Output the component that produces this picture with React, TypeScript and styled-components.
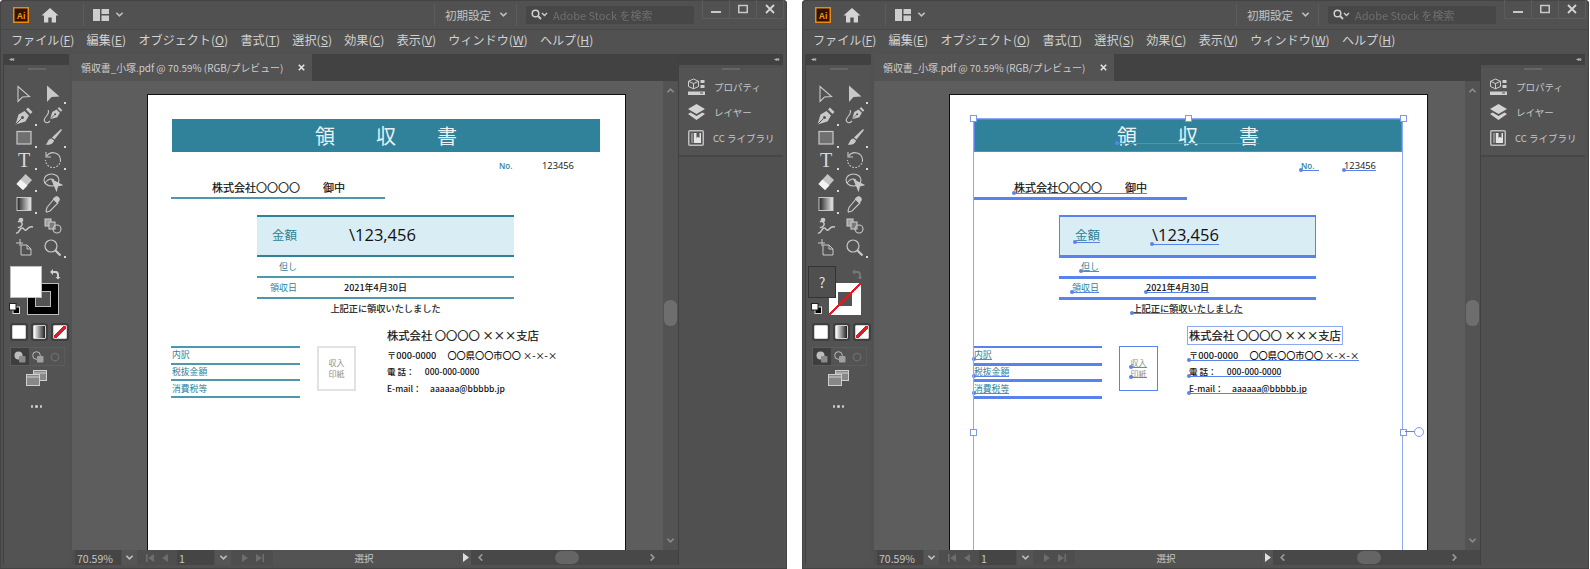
import * as React from "react";
import styled, { createGlobalStyle, css, ThemeProvider } from "styled-components";

const UI_FONT = `"Noto Sans CJK JP", "Noto Sans", sans-serif`;
const TEAL = "#2f8299";
const RULE = "#4d98ae";
const BLUE = "#5a82ec";

const GlobalStyle = createGlobalStyle`
  html, body { margin: 0; padding: 0; background: #fff; }
  body { font-family: ${UI_FONT}; }
`;

const Page = styled.div`
  display: flex;
  gap: 15px;
  width: 1590px;
  height: 569px;
  overflow: hidden;
  background: #fff;
`;

const Window = styled.div`
  width: 787px;
  height: 569px;
  flex: none;
  display: flex;
  flex-direction: column;
  background: #515151;
  color: #cfcfcf;
  border-radius: 4px 4px 0 0;
  box-shadow: inset 0 0 0 1px #444;
  padding: 0 4px;
  box-sizing: border-box;
  filter: blur(0.3px);
`;

/* title bar */
const TitleBar = styled.div`
  height: 30px;
  flex: none;
  display: flex;
  align-items: center;
  border-bottom: 1px solid #474747;
  box-sizing: border-box;
  margin: 0 -4px;
  padding: 0 3px 0 13px;
`;
const Divider = styled.div<{ $left: number; $right: number }>`
  width: 1px;
  height: 22px;
  background: #5c5c5c;
  margin: 0 ${(p) => p.$right}px 0 ${(p) => p.$left}px;
`;
const Workspace = styled.span`
  font-size: 11.5px;
  color: #c4c4c4;
  white-space: nowrap;
`;
const Search = styled.div`
  width: 168px;
  height: 18px;
  background: #474747;
  border-radius: 2px;
  display: flex;
  align-items: center;
  gap: 4px;
  padding-left: 5px;
  box-sizing: border-box;
  font-size: 11px;
  color: #6f6f6f;
  white-space: nowrap;
`;
const WinButtons = styled.div`
  display: flex;
  margin: -11px 0 0 8px;
  border: 1px solid #5c5c5c;
  border-top: 0;
  height: 18px;
`;
const WinButton = styled.div`
  width: 26px;
  display: flex;
  align-items: center;
  justify-content: center;
  & + & { border-left: 1px solid #5c5c5c; }
`;

/* menu */
const MenuBar = styled.div`
  height: 24px;
  flex: none;
  display: flex;
  align-items: center;
  gap: 12.3px;
  padding: 0 0 6px 7px;
  box-sizing: border-box;
  font-size: 12.1px;
  color: #d2d2d2;
  white-space: nowrap;
`;
const MenuKey = styled.span`
  text-decoration: underline;
  text-underline-offset: 1px;
`;

const Body = styled.div`
  flex: none;
  height: 511px;
  display: flex;
`;

/* left tools */
const Toolbar = styled.div`
  width: 65px;
  flex: none;
  margin-right: 3px;
  background: #535353;
  box-shadow: -1px 0 0 #414141;
  display: flex;
  flex-direction: column;
`;
const PanelHead = styled.div<{ $right?: boolean }>`
  height: 11px;
  flex: none;
  background: #414141;
  color: #b4b4b4;
  font-size: 6px;
  line-height: 9px;
  letter-spacing: -1px;
  padding: 0 5px;
  text-align: ${(p) => (p.$right ? "right" : "left")};
`;
const Grip = styled.div`
  width: 18px;
  height: 2px;
  margin: 3px auto 0;
  background: #666;
`;
const ToolGrid = styled.div`
  display: grid;
  grid-template-columns: 29px 29px;
  grid-auto-rows: 22px;
  padding: 13px 0 0 5px;
`;
const Tool = styled.div<{ $more?: boolean }>`
  position: relative;
  display: flex;
  align-items: center;
  justify-content: center;
  ${(p) =>
    p.$more &&
    css`
      &::after {
        content: "";
        position: absolute;
        right: 1px;
        bottom: 1px;
        width: 2px;
        height: 2px;
        background: #d8d8d8;
      }
    `}
`;
const ColorWell = styled.div`
  position: relative;
  height: 52px;
  margin-top: 7px;
`;
const FillBox = styled.div<{ $unknown?: boolean }>`
  position: absolute;
  left: ${(p) => (p.$unknown ? 2 : 6)}px;
  top: 0;
  width: ${(p) => (p.$unknown ? 28 : 32)}px;
  height: 32px;
  background: ${(p) => (p.$unknown ? "#4f4f4f" : "#fff")};
  border: 1px solid ${(p) => (p.$unknown ? "#333" : "#bdbdbd")};
  box-sizing: border-box;
  z-index: 1;
  color: #ddd;
  font-size: 14px;
  display: flex;
  align-items: center;
  justify-content: center;
`;
const StrokeBox = styled.div<{ $none?: boolean }>`
  position: absolute;
  left: 23px;
  top: 17px;
  width: 32px;
  height: 32px;
  box-sizing: border-box;
  background: ${(p) => (p.$none ? "#fff" : "#000")};
  border: ${(p) => (p.$none ? "0" : "1px solid #bdbdbd")};
  display: flex;
  align-items: center;
  justify-content: center;
  &::before {
    content: "";
    width: 14px;
    height: 14px;
    background: #535353;
    border: ${(p) => (p.$none ? "0" : "1px solid #bdbdbd")};
  }
  ${(p) =>
    p.$none &&
    css`
      &::after {
        content: "";
        position: absolute;
        inset: 0;
        background: linear-gradient(135deg, transparent 0 47%, #e01b24 47% 53%, transparent 53%);
      }
    `}
`;
const WellGlyph = styled.div<{ $left: number; $top: number }>`
  position: absolute;
  left: ${(p) => p.$left}px;
  top: ${(p) => p.$top}px;
  line-height: 0;
`;
const SwatchRow = styled.div`
  display: flex;
  gap: 3px;
  margin: 5px 0 0 6px;
`;
const Swatch = styled.div<{ $kind: "fill" | "grad" | "none" }>`
  width: 12px;
  height: 12px;
  border: 1px solid #d0d0d0;
  outline: 2px solid #3f3f3f;
  border-radius: 1px;
  margin: 2px;
  box-sizing: content-box;
  background: ${(p) =>
    p.$kind === "fill"
      ? "#fff"
      : p.$kind === "grad"
        ? "linear-gradient(90deg, #fff, #222)"
        : "linear-gradient(135deg, #fff 0 40%, #e01b24 40% 60%, #fff 60%)"};
`;
const ModeRow = styled.div`
  display: flex;
  width: 53px;
  height: 17px;
  margin: 6px 0 0 6px;
  border: 1px solid #5c5c5c;
`;
const Mode = styled.div<{ $on?: boolean }>`
  flex: 1;
  display: flex;
  align-items: center;
  justify-content: center;
  background: ${(p) => (p.$on ? "#3e3e3e" : "transparent")};
`;
const ScreenMode = styled.div`
  display: flex;
  justify-content: center;
  margin-top: 4px;
`;
const MoreDots = styled.div`
  display: flex;
  justify-content: center;
  gap: 2px;
  margin-top: 19px;
  span {
    width: 2.5px;
    height: 2.5px;
    border-radius: 50%;
    background: #c8c8c8;
  }
`;

/* center */
const Center = styled.div`
  width: 606px;
  flex: none;
  display: flex;
  flex-direction: column;
`;
const TabBar = styled.div`
  height: 27px;
  flex: none;
  background: #424242;
  display: flex;
`;
const Tab = styled.div`
  width: 240px;
  background: #535353;
  display: flex;
  align-items: center;
  justify-content: space-between;
  padding: 0 7px 0 9px;
  box-sizing: border-box;
  font-size: 9.9px;
  color: #cdcdcd;
  white-space: nowrap;
`;
const CanvasRow = styled.div`
  flex: none;
  height: 469px;
  display: flex;
`;
const Canvas = styled.div`
  width: 591px;
  flex: none;
  background: #5d5d5d;
  padding: 13px 0 0 75px;
  box-sizing: border-box;
  overflow: hidden;
`;
const VScroll = styled.div`
  width: 15px;
  flex: none;
  background: #535353;
  display: flex;
  flex-direction: column;
  align-items: center;
  justify-content: space-between;
  padding: 5px 0;
  box-sizing: border-box;
`;
const VThumb = styled.div`
  width: 13px;
  height: 26px;
  border-radius: 6px;
  background: #6e6e6e;
  margin-top: -6px;
`;
const StatusBar = styled.div`
  height: 15px;
  flex: none;
  background: #4e4e4e;
  display: flex;
  align-items: stretch;
  font-size: 10.5px;
  color: #c6c6c6;
  padding-left: 3px;
`;
const StatusField = styled.div<{ $w: number }>`
  width: ${(p) => p.$w}px;
  background: #454545;
  line-height: 17px;
  padding-left: 2px;
  box-sizing: border-box;
`;
const StatusBtn = styled.div<{ $w: number }>`
  width: ${(p) => p.$w}px;
  background: #555;
  margin-left: 1px;
  display: flex;
  align-items: center;
  justify-content: center;
`;
const StatusNav = styled.div<{ $w: number }>`
  width: ${(p) => p.$w}px;
  display: flex;
  align-items: center;
  justify-content: center;
  gap: 7px;
`;
const StatusLabel = styled.div`
  width: 186px;
  padding-right: 4px;
  box-sizing: border-box;
  text-align: center;
  line-height: 16px;
  background: #535353;
  font-size: 9.5px;
`;
const HScroll = styled.div`
  flex: 1;
  position: relative;
  display: flex;
  align-items: center;
  justify-content: space-between;
  padding: 0 21px 0 5px;
  background: #484848;
`;
const HThumb = styled.div`
  position: absolute;
  left: 84px;
  top: 1px;
  width: 24px;
  height: 13px;
  border-radius: 7px;
  background: #656565;
`;

/* right panel */
const RightPanel = styled.div`
  width: 104px;
  flex: none;
  margin-left: 1px;
  background: #505050;
  box-shadow: -1px 0 0 #414141;
`;
const PanelGroup = styled.div`
  height: 89px;
  background: #535353;
  border-bottom: 2px solid #474747;
  box-sizing: border-box;
`;
const PanelItems = styled.div`
  display: flex;
  flex-direction: column;
  padding: 4px 0 0 9px;
`;
const PanelItem = styled.div`
  height: 25.5px;
  display: flex;
  align-items: center;
  gap: 9px;
  font-size: 9.5px;
  color: #c8c8c8;
  white-space: nowrap;
`;

/* the receipt on the artboard */
const Artboard = styled.div`
  position: relative;
  width: 479px;
  height: 470px;
  background: #fff;
  border: 1px solid #111;
  border-bottom: 0;
  box-sizing: border-box;
  padding: 24px 0 0 24px;
  overflow: hidden;
  color: #111;
  font-family: "Noto Sans CJK JP", "Open Sans", sans-serif;
`;

// text objects show their baseline and anchor point when selected
const anchored = css<{ $boxed?: boolean }>`
  position: relative;
  ${(p) =>
    p.theme.selected &&
    !p.$boxed &&
    css`
      &::after {
        content: "";
        position: absolute;
        left: 0;
        right: 0;
        bottom: 1px;
        height: 1px;
        background: ${BLUE};
      }
      &::before {
        content: "";
        position: absolute;
        left: -2px;
        bottom: 0;
        width: 4px;
        height: 4px;
        border-radius: 50%;
        background: ${BLUE};
      }
    `}
  ${(p) =>
    p.theme.selected &&
    p.$boxed &&
    css`
      outline: 1px solid #8ea9f2;
      outline-offset: 1px;
    `}
`;
const ruleColor = (p: { theme: { selected?: boolean } }) => (p.theme.selected ? BLUE : RULE);
const heavyRule = (p: { theme: { selected?: boolean } }) => (p.theme.selected ? BLUE : TEAL);
const ruleGlow = (p: { theme: { selected?: boolean } }) => (p.theme.selected ? `box-shadow: 0 1px 0 ${BLUE};` : "");

const HeadBand = styled.div`
  width: 428px;
  height: 33px;
  background: ${TEAL};
  box-sizing: border-box;
  border: 1px solid ${(p) => (p.theme.selected ? BLUE : "#2f8299")};
  display: flex;
  justify-content: center;
  align-items: center;
`;
const HeadText = styled.span`
  ${anchored}
  display: flex;
  gap: 41px;
  font-size: 20px;
  line-height: 26px;
  color: #e8f1f4;
  &::before { bottom: 4px !important; }
  &::after { bottom: 5px !important; }
`;
const NoRow = styled.div`
  height: 12px;
  margin: 8px 0 0 327px;
  display: flex;
  align-items: center;
`;
const NoLabel = styled.span`
  ${anchored}
  width: 18px;
  font-size: 8px;
  font-weight: 600;
  color: ${TEAL};
  font-family: "Open Sans", sans-serif;
  line-height: 12px;
`;
const NoValue = styled.span`
  ${anchored}
  margin-left: 25px;
  font-size: 9.3px;
  line-height: 12px;
  font-family: "Open Sans", sans-serif;
  font-weight: 500;
`;
const NameRow = styled.div`
  width: 214px;
  height: 27px;
  margin-left: -1px;
  padding-left: 41px;
  box-sizing: border-box;
  border-bottom: 2px solid ${ruleColor};
  ${ruleGlow}
  display: flex;
  align-items: flex-end;
  padding-bottom: 2px;
`;
const NameText = styled.span`
  ${anchored}
  display: flex;
  gap: 23px;
  font-size: 11px;
  line-height: 16px;
  white-space: nowrap;
  -webkit-text-stroke: 0.2px #111;
`;
const AmountBlock = styled.div`
  width: 257px;
  margin: 16px 0 0 85px;
`;
const AmountRow = styled.div`
  height: 42px;
  box-sizing: border-box;
  background: #d9edf4;
  border-top: 2px solid ${heavyRule};
  border-bottom: 2px solid ${heavyRule};
  ${ruleGlow}
  padding-bottom: 2px;
  display: flex;
  align-items: center;
  ${(p) =>
    p.theme.selected &&
    css`
      border-left: 1px solid ${BLUE};
      border-right: 1px solid ${BLUE};
    `}
`;
const InfoRow = styled.div`
  height: 21px;
  box-sizing: border-box;
  border-bottom: 2px solid ${ruleColor};
  ${ruleGlow}
  padding-bottom: 1px;
  display: flex;
  align-items: center;
`;
const LabelCell = styled.div`
  width: 40px;
  flex: none;
  display: flex;
  justify-content: flex-end;
`;
const Label = styled.span<{ $big?: boolean }>`
  ${anchored}
  font-size: ${(p) => (p.$big ? 12.5 : 9)}px;
  line-height: ${(p) => (p.$big ? 18 : 13)}px;
  color: ${TEAL};
  white-space: nowrap;
`;
const Amount = styled.span`
  ${anchored}
  margin-left: 52px;
  font-family: "Open Sans", sans-serif;
  font-size: 16.5px;
  line-height: 22px;
`;
const DateText = styled.span`
  ${anchored}
  margin-left: 47px;
  font-size: 9px;
  line-height: 13px;
  white-space: nowrap;
  font-weight: 500;
`;
const NoticeRow = styled.div`
  height: 20px;
  padding-bottom: 2px;
  box-sizing: border-box;
  display: flex;
  justify-content: center;
  align-items: center;
`;
const Notice = styled.span`
  ${anchored}
  font-size: 9.2px;
  line-height: 13px;
  white-space: nowrap;
  -webkit-text-stroke: 0.15px #111;
`;
const BottomRow = styled.div`
  display: flex;
  align-items: flex-start;
  margin: 9px 0 0 -1px;
`;
const ListCol = styled.div`
  width: 129px;
  margin-top: 18px;
  border-top: 2px solid ${ruleColor};
  ${ruleGlow}
`;
const ListRow = styled.div`
  height: 16.7px;
  box-sizing: border-box;
  border-bottom: 2px solid ${ruleColor};
  ${ruleGlow}
  display: flex;
  align-items: center;
  padding-left: 1px;
`;
const ListLabel = styled.span`
  ${anchored}
  font-size: 8.8px;
  line-height: 12px;
  color: ${TEAL};
`;
const Stamp = styled.div`
  width: 39px;
  height: 45px;
  margin: 18px 0 0 17px;
  box-sizing: border-box;
  border: ${(p) => (p.theme.selected ? `1px solid ${BLUE}` : "2px solid #e2e2e2")};
  display: flex;
  flex-direction: column;
  align-items: center;
  justify-content: center;
`;
const StampText = styled.span`
  ${anchored}
  font-size: 8px;
  line-height: 10.5px;
  color: #8d8d8d;
`;
const IssuerCol = styled.div`
  margin-left: 31px;
  display: flex;
  flex-direction: column;
  align-items: flex-start;
`;
const IssuerName = styled.span`
  ${anchored}
  font-size: 11.3px;
  line-height: 15px;
  white-space: nowrap;
  margin-bottom: 2px;
  -webkit-text-stroke: 0.2px #111;
`;
const IssuerLine = styled.span<{ $small?: boolean }>`
  ${anchored}
  font-size: ${(p) => (p.$small ? 8.5 : 9.2)}px;
  line-height: 14px;
  margin-top: 2.5px;
  white-space: pre;
  font-weight: 500;
`;

/* selection frame lies over the artwork */
const SelectionFrame = styled.div`
  position: absolute;
  left: 23px;
  top: 23px;
  width: 430px;
  height: 500px;
  border: 1px solid #8ea9f2;
  box-sizing: border-box;
  pointer-events: none;
`;
const Handle = styled.div<{ $x: number; $y: number; $round?: boolean }>`
  position: absolute;
  left: ${(p) => p.$x}px;
  top: ${(p) => p.$y}px;
  width: ${(p) => (p.$round ? 8 : 5)}px;
  height: ${(p) => (p.$round ? 8 : 5)}px;
  background: #fff;
  border: 1px solid #7c9bf0;
  border-radius: ${(p) => (p.$round ? "50%" : "0")};
`;
const RotateStem = styled.div`
  position: absolute;
  left: 455px;
  top: 336px;
  width: 11px;
  height: 1px;
  background: ${BLUE};
`;

const G = "#c8c8c8";

const Chevron = ({ dir = "down", size = 9, color = "#c0c0c0" }: { dir?: "down" | "up" | "left" | "right"; size?: number; color?: string }) => {
  const d = { down: "M1.5 3l3.5 3.5L8.5 3", up: "M1.5 7L5 3.5 8.5 7", left: "M7 1.5L3.5 5 7 8.5", right: "M3 1.5L6.5 5 3 8.5" }[dir];
  return (
    <svg width={size} height={size} viewBox="0 0 10 10">
      <path d={d} fill="none" stroke={color} strokeWidth="1.8" />
    </svg>
  );
};

const ToolIcon = ({ children }: { children: React.ReactNode }) => (
  <svg width="20" height="20" viewBox="0 0 20 20" fill="none">
    {children}
  </svg>
);

const PenNib = () => (
  <g>
    <path d="M1.500 18.500L4.500 8.500 10.500 5 15 9.500 11.500 15.500z" fill={G} />
    <path d="M12 3.500L14 1.500 18.500 6 16.500 8z" fill={G} />
    <path d="M1.500 18.500L7.500 12.500" stroke="#535353" strokeWidth="1" />
    <circle cx="8.500" cy="11.500" r="1.500" fill="#535353" />
  </g>
);

const TOOLS: { more?: boolean; icon: React.ReactNode }[] = [
  { icon: <path d="M4 2.5v15l4.500-4.500 7-.5z" stroke={G} strokeWidth="1.1" /> },
  { more: true, icon: <path d="M4 1.500v16.500l4.500-5 8-.5z" fill={G} /> },
  { more: true, icon: <PenNib /> },
  { icon: <g><g transform="translate(6 0) scale(.72)"><PenNib /></g><path d="M7 15c-4 4-7 0-5-3s5-5 3-8" stroke={G} strokeWidth="1.100" /></g> },
  { more: true, icon: <rect x="3" y="3.500" width="14" height="12.500" fill="#707070" stroke={G} strokeWidth="1.200" /> },
  { more: true, icon: <g fill={G}><path d="M18 1l1 1-7.500 9.500-2.500-2z" /><path d="M8.500 10.500l2.500 2c-.5 3.500-5 5-8.500 4 2.500-1 2-5.500 6-6z" /></g> },
  { more: true, icon: <text x="10" y="17" textAnchor="middle" fontFamily="Liberation Serif, serif" fontSize="20" fill="#d8d8d8">T</text> },
  { more: true, icon: <g stroke={G} strokeWidth="1.100"><path d="M3.800 6A7.500 7.500 0 0 1 17.500 10" /><path d="M17.500 10A7.500 7.500 0 0 1 2.500 10" strokeDasharray="1.800 1.400" /><path d="M3 2v5h5" /></g> },
  { more: true, icon: <g><path d="M11.500 2l6.500 6-9 10-6.500-6z" fill="#c4c4c4" /><path d="M6.500 7.500l7 6.100L9 18l-6.500-6z" fill="#f2f2f2" /></g> },
  { icon: <g stroke={G} strokeWidth="1.100"><ellipse cx="8.500" cy="8" rx="7.500" ry="6" /><path d="M2 11c3-4 6-5 9-3" /><path d="M9 8l10 5-4.500 1-1 4.500z" fill={G} /></g> },
  { more: true, icon: <g><defs><linearGradient id="toolGrad"><stop offset="0" stopColor="#222" /><stop offset="1" stopColor="#eee" /></linearGradient></defs><rect x="3" y="3.500" width="14" height="13" fill="url(#toolGrad)" stroke={G} /></g> },
  { icon: <g stroke={G} strokeWidth="1.100"><path d="M11 5l4 4-8 8-3.500 1-.5-1 1-3.500z" /><path d="M12 3.500c2-2.500 6 1.500 3.500 3.500l-1.500 1.500-3.500-3.500z" fill={G} /></g> },
  { icon: <g stroke={G} strokeWidth="1.500"><path d="M2 17c3 1 3-4 6-5 2-.5 2 3 4 2s2-4 7-3" /><path d="M4 6c2-2 5 1 4 3s-3 3-4 2" /><circle cx="7" cy="4" r="1.600" fill={G} /></g> },
  { icon: <g stroke={G} strokeWidth="1.100"><rect x="2" y="3" width="6" height="7" fill="#a0a0a0" /><rect x="6" y="6" width="6" height="7" fill="#7a7a7a" /><circle cx="14" cy="13" r="4" /></g> },
  { icon: <g stroke={G} strokeWidth="1"><path d="M6 1v7M2 5h7" /><path d="M7 7h6l4 4v6H7z" /><path d="M13 7v4h4" /></g> },
  { more: true, icon: <g stroke={G}><circle cx="8" cy="8" r="6" strokeWidth="1.200" /><path d="M12.500 12.500l5 5" strokeWidth="2.200" /></g> },
];

const MENU: [string, string][] = [
  ["ファイル", "F"],
  ["編集", "E"],
  ["オブジェクト", "O"],
  ["書式", "T"],
  ["選択", "S"],
  ["効果", "C"],
  ["表示", "V"],
  ["ウィンドウ", "W"],
  ["ヘルプ", "H"],
];

const AiLogo = () => (
  <svg width="16" height="16" viewBox="0 0 16 16">
    <rect x=".75" y=".75" width="14.500" height="14.500" fill="#2f1400" stroke="#e98a14" strokeWidth="1.500" />
    <text x="8" y="11.500" textAnchor="middle" fontFamily="Liberation Sans, sans-serif" fontSize="8.500" fontWeight="700" fill="#f59a1c">Ai</text>
  </svg>
);

const HomeIcon = () => (
  <svg width="18" height="16" viewBox="0 0 18 16" style={{ marginLeft: 12 }}>
    <path d="M9 1L0.500 8.500h2.500V15.500h4.300v-5h3.400v5H15V8.500h2.500z" fill="#d4d4d4" />
  </svg>
);

const LayoutIcon = () => (
  <svg width="16" height="12" viewBox="0 0 16 12">
    <path d="M0 0h7v12H0zM8.500 0H16v5H8.500zM8.500 6.500H16V12H8.500z" fill="#cdcdcd" />
  </svg>
);

const SearchIcon = () => (
  <svg width="18" height="11" viewBox="0 0 18 11">
    <circle cx="4.500" cy="4.500" r="3.300" fill="none" stroke="#d0d0d0" strokeWidth="1.500" />
    <path d="M7 7l3 3" stroke="#d0d0d0" strokeWidth="1.800" />
    <path d="M11 4l2.500 2.500L16 4" fill="none" stroke="#d0d0d0" strokeWidth="1.300" />
  </svg>
);

const PropsIcon = () => (
  <svg width="17" height="18" viewBox="0 0 17 18">
    <path d="M5.500 1l5 2.300v5.200l-5 2.300-5-2.300V3.300z" fill="none" stroke="#cfcfcf" />
    <path d="M.500 3.300l5 2.300 5-2.300M5.500 5.600v5" stroke="#cfcfcf" fill="none" />
    <path d="M12.500 2h4v3h-4zM12.500 7h4v3h-4z" fill="#cfcfcf" />
    <path d="M0 13.500h17v3.500H0z" fill="#cfcfcf" />
    <path d="M12 15h3" stroke="#535353" />
  </svg>
);

const LayersIcon = () => (
  <svg width="17" height="16" viewBox="0 0 17 16">
    <path d="M8.500 0L17 5l-8.500 5L0 5z" fill="#d4d4d4" />
    <path d="M2.500 8.500L8.500 12l6-3.500L17 10l-8.500 6L0 10z" fill="#d4d4d4" />
  </svg>
);

const LibraryIcon = () => (
  <svg width="16" height="16" viewBox="0 0 16 16">
    <rect x=".750" y=".750" width="14.500" height="14.500" rx="1" fill="none" stroke="#bdbdbd" strokeWidth="1.500" />
    <path d="M3 3h2.500v10H3z" fill="#8a8a8a" />
    <path d="M6 3h7v10H6z" fill="#e4e4e4" />
    <path d="M8.500 3h3v5l-1.500-1.200L8.500 8z" fill="#535353" />
  </svg>
);

const NavPair = ({ flip }: { flip?: boolean }) => (
  <StatusNav $w={flip ? 42 : 40}>
    <svg width="8" height="8" viewBox="0 0 8 8">
      <path d={flip ? "M1 0l6 4-6 4z" : "M0 0h1.500v8H0zM8 0L2 4l6 4z"} fill="#6e6e6e" />
    </svg>
    <svg width="8" height="8" viewBox="0 0 8 8">
      <path d={flip ? "M6.500 0H8v8H6.500zM0 0l6 4-6 4z" : "M7 0L1 4l6 4z"} fill="#6e6e6e" />
    </svg>
  </StatusNav>
);

const Receipt = ({ selected }: { selected: boolean }) => (
  <Artboard>
    <HeadBand>
      <HeadText>
        <span>領</span>
        <span>収</span>
        <span>書</span>
      </HeadText>
    </HeadBand>
    <NoRow>
      <NoLabel>No.</NoLabel>
      <NoValue>123456</NoValue>
    </NoRow>
    <NameRow>
      <NameText>
        <span>株式会社〇〇〇〇</span>
        <span>御中</span>
      </NameText>
    </NameRow>
    <AmountBlock>
      <AmountRow>
        <LabelCell>
          <Label $big>金額</Label>
        </LabelCell>
        <Amount>\123,456</Amount>
      </AmountRow>
      <InfoRow>
        <LabelCell>
          <Label>但し</Label>
        </LabelCell>
      </InfoRow>
      <InfoRow>
        <LabelCell>
          <Label>領収日</Label>
        </LabelCell>
        <DateText>2021年4月30日</DateText>
      </InfoRow>
      <NoticeRow>
        <Notice>上記正に領収いたしました</Notice>
      </NoticeRow>
    </AmountBlock>
    <BottomRow>
      <ListCol>
        <ListRow>
          <ListLabel>内訳</ListLabel>
        </ListRow>
        <ListRow>
          <ListLabel>税抜金額</ListLabel>
        </ListRow>
        <ListRow>
          <ListLabel>消費税等</ListLabel>
        </ListRow>
      </ListCol>
      <Stamp>
        <StampText>収入</StampText>
        <StampText>印紙</StampText>
      </Stamp>
      <IssuerCol>
        <IssuerName $boxed>株式会社 〇〇〇〇 ×××支店</IssuerName>
        <IssuerLine>〒000-0000　 〇〇県〇〇市〇〇 ×-×-×</IssuerLine>
        <IssuerLine $small>電 話：　 000-000-0000</IssuerLine>
        <IssuerLine $small>E-mail：　aaaaaa@bbbbb.jp</IssuerLine>
      </IssuerCol>
    </BottomRow>
    {selected && (
      <>
        <SelectionFrame />
        <Handle $x={20} $y={20} />
        <Handle $x={235} $y={20} />
        <Handle $x={450} $y={20} />
        <Handle $x={20} $y={334} />
        <Handle $x={450} $y={334} />
        <RotateStem />
        <Handle $x={464} $y={332} $round />
      </>
    )}
  </Artboard>
);

const IllustratorWindow = ({ selected }: { selected: boolean }) => (
  <ThemeProvider theme={{ selected }}>
    <Window>
      <TitleBar>
        <AiLogo />
        <HomeIcon />
        <Divider $left={24} $right={9} />
        <LayoutIcon />
        <span style={{ width: 6 }} />
        <Chevron />
        <span style={{ flex: 1 }} />
        <Divider $left={0} $right={10} />
        <Workspace>初期設定</Workspace>
        <span style={{ width: 8 }} />
        <Chevron />
        <Divider $left={8} $right={9} />
        <Search>
          <SearchIcon />
          Adobe Stock を検索
        </Search>
        <WinButtons>
          <WinButton>
            <svg width="10" height="10" viewBox="0 0 10 10"><path d="M0 7h10v2H0z" fill="#c8c8c8" /></svg>
          </WinButton>
          <WinButton>
            <svg width="10" height="10" viewBox="0 0 10 10"><rect x=".750" y="1.500" width="8.500" height="7" fill="none" stroke="#c8c8c8" strokeWidth="1.500" /></svg>
          </WinButton>
          <WinButton>
            <svg width="10" height="10" viewBox="0 0 10 10"><path d="M1 1l8 8M9 1l-8 8" stroke="#d4d4d4" strokeWidth="1.800" /></svg>
          </WinButton>
        </WinButtons>
      </TitleBar>
      <MenuBar>
        {MENU.map(([label, key]) => (
          <span key={key}>
            {label}(<MenuKey>{key}</MenuKey>)
          </span>
        ))}
      </MenuBar>
      <Body>
        <Toolbar>
          <PanelHead>◂◂</PanelHead>
          <Grip />
          <ToolGrid>
            {TOOLS.map((t, i) => (
              <Tool key={i} $more={t.more}>
                <ToolIcon>{t.icon}</ToolIcon>
              </Tool>
            ))}
          </ToolGrid>
          <ColorWell>
            <FillBox $unknown={selected}>{selected ? "?" : null}</FillBox>
            <StrokeBox $none={selected} />
            <WellGlyph $left={45} $top={2}>
              <svg width="12" height="12" viewBox="0 0 12 12">
                <path d="M1 4l3-3v2h3c2 0 3 2 3 4v2h1.500L9 11.500 6.500 9H8V7c0-1-.5-2-1.500-2H4v2z" fill={selected ? "#777" : "#d0d0d0"} />
              </svg>
            </WellGlyph>
            <WellGlyph $left={5} $top={37}>
              <svg width="11" height="11" viewBox="0 0 11 11">
                <rect x="4" y="4" width="6.500" height="6.500" fill="#000" stroke="#ddd" />
                <rect x=".500" y=".500" width="6.500" height="6.500" fill="#fff" stroke="#222" />
              </svg>
            </WellGlyph>
          </ColorWell>
          <SwatchRow>
            <Swatch $kind="fill" />
            <Swatch $kind="grad" />
            <Swatch $kind="none" />
          </SwatchRow>
          <ModeRow>
            <Mode $on>
              <svg width="12" height="12" viewBox="0 0 12 12"><circle cx="4.500" cy="4.500" r="4" fill="#bdbdbd" /><rect x="5" y="5" width="6.500" height="6.500" rx="1" fill="#8a8a8a" /></svg>
            </Mode>
            <Mode>
              <svg width="12" height="12" viewBox="0 0 12 12"><circle cx="4.500" cy="4.500" r="3.800" fill="none" stroke="#bdbdbd" /><rect x="5" y="5" width="6.500" height="6.500" rx="1" fill="#a0a0a0" /></svg>
            </Mode>
            <Mode>
              <svg width="10" height="10" viewBox="0 0 12 12"><circle cx="6" cy="6" r="4.500" fill="none" stroke="#6e6e6e" strokeWidth="1.500" /></svg>
            </Mode>
          </ModeRow>
          <ScreenMode>
            <svg width="21" height="16" viewBox="0 0 21 16">
              <rect x="7.500" y=".500" width="13" height="10" fill="#888" stroke="#cfcfcf" />
              <rect x=".500" y="4.500" width="13" height="11" fill="#888" stroke="#cfcfcf" />
              <path d="M1 7h12M8 3h12" stroke="#cfcfcf" />
            </svg>
          </ScreenMode>
          <MoreDots>
            <span />
            <span />
            <span />
          </MoreDots>
        </Toolbar>
        <Center>
          <TabBar>
            <Tab>
              <span>領収書_小塚.pdf @ 70.59% (RGB/プレビュー)</span>
              <svg width="7" height="7" viewBox="0 0 7 7"><path d="M.8.800l5.400 5.400M6.200.800L.8 6.200" stroke="#e4e4e4" strokeWidth="1.600" /></svg>
            </Tab>
          </TabBar>
          <CanvasRow>
            <Canvas>
              <Receipt selected={selected} />
            </Canvas>
            <VScroll>
              <Chevron dir="up" color="#8c8c8c" />
              <VThumb />
              <Chevron color="#8c8c8c" />
            </VScroll>
          </CanvasRow>
          <StatusBar>
            <StatusField $w={46}>70.59%</StatusField>
            <StatusBtn $w={15}>
              <Chevron />
            </StatusBtn>
            <NavPair />
            <StatusField $w={37}>1</StatusField>
            <StatusBtn $w={16}>
              <Chevron />
            </StatusBtn>
            <NavPair flip />
            <StatusLabel>選択</StatusLabel>
            <StatusBtn $w={11}>
              <svg width="6" height="9" viewBox="0 0 6 9"><path d="M0 0l6 4.500L0 9z" fill="#e0e0e0" /></svg>
            </StatusBtn>
            <HScroll>
              <Chevron dir="left" color="#9a9a9a" />
              <HThumb />
              <Chevron dir="right" color="#9a9a9a" />
            </HScroll>
          </StatusBar>
        </Center>
        <RightPanel>
          <PanelHead $right>◂◂</PanelHead>
          <PanelGroup>
            <Grip />
            <PanelItems>
              <PanelItem>
                <PropsIcon />
                プロパティ
              </PanelItem>
              <PanelItem>
                <LayersIcon />
                レイヤー
              </PanelItem>
              <PanelItem>
                <LibraryIcon />
                CC ライブラリ
              </PanelItem>
            </PanelItems>
          </PanelGroup>
        </RightPanel>
      </Body>
    </Window>
  </ThemeProvider>
);

export default function App() {
  return (
    <>
      <GlobalStyle />
      <Page>
        <IllustratorWindow selected={false} />
        <IllustratorWindow selected />
      </Page>
    </>
  );
}
